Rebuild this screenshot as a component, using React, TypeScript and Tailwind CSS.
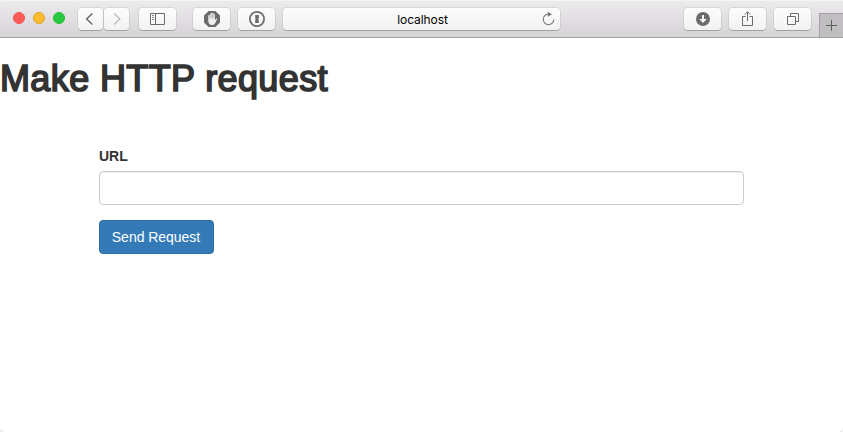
import type { ReactNode } from "react";

function ToolButton({ className = "w-[37px]", label, children }: { className?: string; label: string; children: ReactNode }) {
  return (
    <button
      aria-label={label}
      className={`flex h-[22px] shrink-0 items-center justify-center rounded-[4px] bg-linear-to-b from-[#fdfdfd] to-[#f2f2f2] shadow-[0_0_0_1px_rgba(0,0,0,0.07),0_1px_0_rgba(0,0,0,0.2)] ${className}`}
    >
      {children}
    </button>
  );
}

function Toolbar() {
  return (
    <header className="flex h-[38px] w-full items-start border-b border-[#a09ea0] bg-linear-to-b from-[#edebed] to-[#d5d3d5] pt-2 shadow-[inset_0_1px_0_#f5f4f5]">
      <div className="mt-1 ml-[13px] flex gap-2">
        <span className="size-3 rounded-full border border-[#f0544d] bg-[#fc5b57]" />
        <span className="size-3 rounded-full border border-[#dfa023] bg-[#fdbc2e]" />
        <span className="size-3 rounded-full border border-[#24bd38] bg-[#28c840]" />
      </div>
      <div className="ml-[13px] flex gap-px">
        <ToolButton label="Back" className="w-[25px]">
          <svg width="25" height="22" fill="none" stroke="#6b6b6b" strokeWidth="1.5"><path d="M14.3 5.5 8.7 11l5.6 5.5" /></svg>
        </ToolButton>
        <ToolButton label="Forward" className="w-[25px]">
          <svg width="25" height="22" fill="none" stroke="#bdbdbd" strokeWidth="1.5"><path d="m10.2 5.5 5.6 5.5-5.6 5.5" /></svg>
        </ToolButton>
      </div>
      <ToolButton label="Sidebar" className="ml-[10px] w-[37px]">
        <svg width="37" height="22" fill="none" stroke="#6b6b6b">
          <path d="M11.5 5.5h14v11h-14zM16.5 5.5v11" />
          <path d="M13 7.5h2M13 9.5h2M13 11.5h2" strokeOpacity=".8" />
        </svg>
      </ToolButton>
      <ToolButton label="Content blocker" className="ml-[17px] w-[37px]">
        <svg width="37" height="22">
          <path d="M15.6 3h6.8L27 7.6v6.8L22.4 19h-6.8L11 14.4V7.6z" fill="#6c6c6c" />
          <path d="M15.3 7.7v5c0 2.8 1.4 4.3 3.8 4.3 1.8 0 2.8-1.1 3.4-2.6l1.5-3.2c.1-.8-.7-.9-1.1-.3l-1 1.3V6.6c0-.9-1.2-.9-1.2 0V5.7c0-.9-1.2-.9-1.3 0V5.3c0-.9-1.3-.9-1.3 0v1c0-.9-1.3-.9-1.3 0v1.4c0-.8-1.5-.8-1.5 0z" fill="#f0f0f0" />
          <path d="M16.8 7v3.5M18.1 6v4.5M19.4 6v4.5M20.7 7v3.5" stroke="#6c6c6c" strokeWidth=".35" />
        </svg>
      </ToolButton>
      <ToolButton label="Passwords" className="ml-2 w-[37px]">
        <svg width="37" height="22">
          <circle cx="19" cy="11" r="7.1" fill="#f8f8f8" stroke="#6c6c6c" strokeWidth="1.8" />
          <path d="M17.2 7h3.6v3.3l-.7.8.7.8V15h-3.6v-3.3l.7-.7-.7-.8z" fill="#6c6c6c" />
        </svg>
      </ToolButton>
      <div className="ml-2 flex h-[22px] w-[277px] items-center rounded-[4px] bg-linear-to-b from-[#fdfdfd] to-[#f2f2f2] pl-[27px] shadow-[0_0_0_1px_rgba(0,0,0,0.07),0_1px_0_rgba(0,0,0,0.2)]">
        <span className="flex-1 pt-0.5 text-center font-['Inter','Liberation_Sans',sans-serif] text-[12px] leading-[22px] tracking-[-0.08px] text-black">localhost</span>
        <svg width="25" height="22" fill="none" stroke="#777" strokeWidth="1.1">
          <path d="M13.5 6.1a5.3 5.3 0 1 0 5.3 5.4" />
          <path d="m12.8 3.8 4.2 2.5-4.2 2.5z" fill="#777" stroke="none" />
        </svg>
      </div>
      <ToolButton label="Downloads" className="ml-[124px] w-[37px]">
        <svg width="37" height="22">
          <circle cx="19" cy="11" r="7" fill="#6c6c6c" />
          <path d="M18 7h2v4h2.7L19 15.1 15.3 11H18z" fill="#fafafa" />
        </svg>
      </ToolButton>
      <ToolButton label="Share" className="ml-2 w-[37px]">
        <svg width="37" height="22" fill="none" stroke="#6c6c6c">
          <path d="M16.5 8.5h-3v9h10v-9h-3M18.5 13V4M15.8 6.5l2.7-2.7 2.7 2.7" />
        </svg>
      </ToolButton>
      <ToolButton label="Tabs" className="ml-2 w-[37px]">
        <svg width="37" height="22" fill="none" stroke="#6c6c6c">
          <path d="M13.5 8.5h8v8h-8zM16.5 8.5v-3h8v8h-3" />
        </svg>
      </ToolButton>
      <button aria-label="New tab" className="mt-[5px] ml-2 h-6 w-6 border-t border-l border-[#a3a1a3] bg-[#c0bec0]">
        <svg width="23" height="23" fill="none" stroke="#5f5f5f"><path d="M6 11.5h11M11.5 6v11" /></svg>
      </button>
    </header>
  );
}

export default function App() {
  return (
    <div className="h-[432px] w-[843px] overflow-hidden bg-white">
      <div className="flex h-full flex-col overflow-hidden rounded-[5px] bg-white font-['Liberation_Sans',Arial,sans-serif] text-sm text-[#333] shadow-[0_0_0_1px_#e4e4e4]">
        <Toolbar />
        <main>
          <h1 className="mt-[21px] text-[36px] leading-10 tracking-[0.38px] whitespace-nowrap [-webkit-text-stroke:1.7px_#333]">Make HTTP request</h1>
          <form className="mt-[47px] ml-[99px] w-[645px]">
            <label htmlFor="url" className="mb-[5px] block leading-5 font-bold">URL</label>
            <input id="url" className="block h-[34px] w-full rounded-[4px] border border-[#ccc] bg-white px-3 shadow-[inset_0_1px_1px_rgba(0,0,0,0.075)]" />
            <button type="button" className="mt-[15px] h-[34px] w-[115px] rounded-[4px] border border-[#2e6da4] bg-[#337ab7] pr-[1px] leading-5 tracking-[-0.03px] whitespace-nowrap text-white">Send Request</button>
          </form>
        </main>
      </div>
    </div>
  );
}
